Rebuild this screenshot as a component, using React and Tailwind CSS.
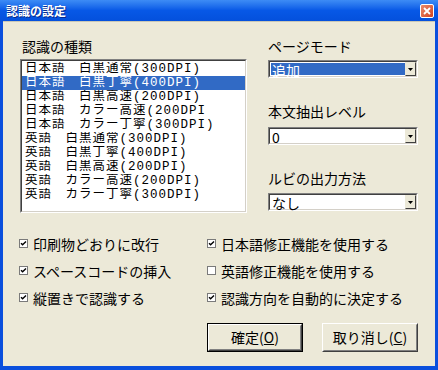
const FONT = { fontFamily: '"Noto Sans CJK JP", "Noto Sans", sans-serif' };
const LIST_FONT = { fontFamily: '"Liberation Mono", "Noto Sans CJK JP", monospace' };

const kinds = [
  "日本語　白黒通常(300DPI)",
  "日本語　白黒丁寧(400DPI)",
  "日本語　白黒高速(200DPI)",
  "日本語　カラー高速(200DPI",
  "日本語　カラー丁寧(300DPI)",
  "英語　白黒通常(300DPI)",
  "英語　白黒丁寧(400DPI)",
  "英語　白黒高速(200DPI)",
  "英語　カラー高速(200DPI)",
  "英語　カラー丁寧(300DPI)",
];

function Sunken({ className = "", children }) {
  return (
    <div className={`border border-t-[#808080] border-l-[#808080] border-b-white border-r-white ${className}`}>
      <div className="h-full w-full border border-t-[#404040] border-l-[#404040] border-b-[#d4d0c8] border-r-[#d4d0c8] bg-white">
        {children}
      </div>
    </div>
  );
}

function Combo({ value, selected }) {
  return (
    <Sunken className="h-[18px]">
      <div className="flex h-full items-center">
        <div className="flex-1 h-full pl-[1px] py-[1px]">
          <div
            className={`h-full leading-[14px] text-[14px] pl-[1px] ${
              selected ? "bg-[#316ac5] text-white" : "text-black"
            }`}
          >
            {value}
          </div>
        </div>
        <div className="h-full w-[11px] border border-t-[#ece9d8] border-l-[#ece9d8] border-b-[#404040] border-r-[#404040] bg-[#ece9d8] flex items-center justify-center">
          <svg width="5" height="3" viewBox="0 0 5 3">
            <path d="M0 0h5L2.5 3z" fill="#000" />
          </svg>
        </div>
      </div>
    </Sunken>
  );
}

function Check({ checked, label }) {
  return (
    <div className="flex items-center h-[27px]">
      <span className="w-[9px] h-[9px] border border-[#7a7a7a] bg-white flex items-center justify-center">
        {checked && (
          <svg width="7" height="7" viewBox="0 0 7 7">
            <path d="M1 3.2l1.6 1.6L6 1.4" stroke="#000" strokeWidth="1.4" fill="none" />
          </svg>
        )}
      </span>
      <span className="ml-[5px] text-[14px] leading-[16px] text-black">{label}</span>
    </div>
  );
}

function Button({ children, isDefault }) {
  return (
    <button
      className={`w-[96px] h-[29px] bg-[#ece9d8] ${
        isDefault ? "border border-black" : ""
      }`}
    >
      <div className="h-full w-full border border-t-white border-l-white border-b-[#404040] border-r-[#404040]">
        <div className="h-full w-full border border-t-[#ece9d8] border-l-[#ece9d8] border-b-[#808080] border-r-[#808080] flex items-center justify-center text-[14px] text-black">
          {children}
        </div>
      </div>
    </button>
  );
}

export default function App() {
  return (
    <div className="w-[438px] h-[370px] bg-[#0a4fdd] flex flex-col" style={FONT}>
      <div className="h-[21px] flex items-center justify-between pl-[6px] pr-[4px] bg-gradient-to-b from-[#3d8cf5] via-[#0758e6] to-[#0450dc]">
        <span className="text-white text-[12px] font-bold leading-none [text-shadow:1px_1px_0_#0a2a8c]">
          認識の設定
        </span>
        <span className="w-[14px] h-[14px] rounded-[2px] border border-white bg-gradient-to-br from-[#e98a6a] to-[#d2401c] flex items-center justify-center">
          <svg width="8" height="8" viewBox="0 0 8 8">
            <path d="M1 1l6 6M7 1L1 7" stroke="#fff" strokeWidth="1.8" />
          </svg>
        </span>
      </div>

      <div className="flex-1 mx-[3px] mb-[4px] bg-[#ece9d8] border-t border-[#c9c7b6] flex flex-col">
        <div className="flex pl-[17px] pt-[16px]">
          <div className="w-[227px]">
            <div className="h-[16px] leading-[16px] text-[14px] ml-[2px] text-black">認識の種類</div>
            <Sunken className="mt-[5px] h-[154px]">
              <div className="pt-[1px]" style={LIST_FONT}>
                {kinds.map((k, i) => (
                  <div
                    key={k}
                    className={`h-[14px] leading-[14px] text-[12.5px] tracking-[1px] pl-[3px] whitespace-nowrap overflow-hidden ${
                      i === 1 ? "bg-[#316ac5] text-white" : "text-black"
                    }`}
                  >
                    {k}
                  </div>
                ))}
              </div>
            </Sunken>
          </div>

          <div className="w-[150px] ml-[21px] flex flex-col">
            <div className="h-[16px] leading-[16px] text-[14px] text-black">ページモード</div>
            <div className="mt-[6px]">
              <Combo value="追加" selected />
            </div>
            <div className="mt-[25px] h-[16px] leading-[16px] text-[14px] text-black">本文抽出レベル</div>
            <div className="mt-[8px]">
              <Combo value="0" />
            </div>
            <div className="mt-[25px] h-[16px] leading-[16px] text-[14px] text-black">ルビの出力方法</div>
            <div className="mt-[7px]">
              <Combo value="なし" />
            </div>
          </div>
        </div>

        <div className="grid grid-cols-[188px_1fr] pl-[16px] mt-[17px]">
          <div>
            <Check checked label="印刷物どおりに改行" />
            <Check checked label="スペースコードの挿入" />
            <Check checked label="縦置きで認識する" />
          </div>
          <div>
            <Check checked label="日本語修正機能を使用する" />
            <Check label="英語修正機能を使用する" />
            <Check checked label="認識方向を自動的に決定する" />
          </div>
        </div>

        <div className="flex justify-end gap-[19px] pr-[17px] mt-[12px]">
          <Button isDefault>
            確定(<span className="underline">O</span>)
          </Button>
          <Button>
            取り消し(<span className="underline">C</span>)
          </Button>
        </div>
      </div>
    </div>
  );
}
